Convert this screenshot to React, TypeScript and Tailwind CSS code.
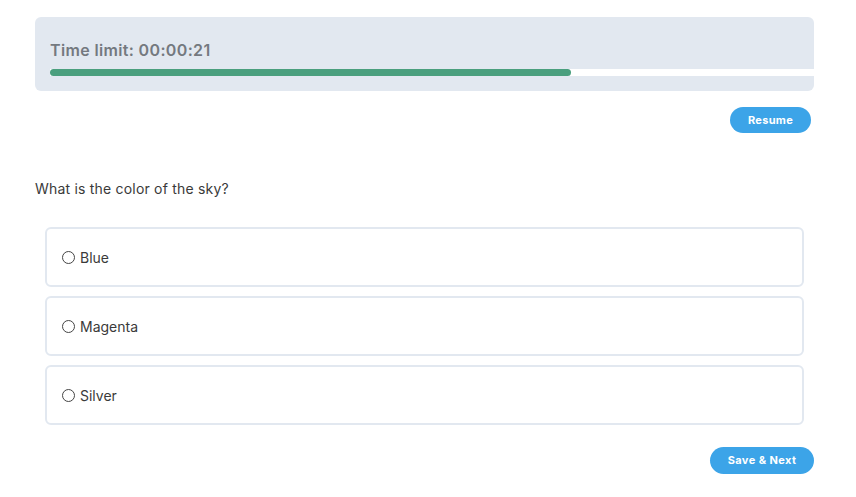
import React from "react";

const options = ["Blue", "Magenta", "Silver"];

export default function App() {
  return (
    <div className="w-[856px] h-[497px] bg-white" style={{ fontFamily: "Inter, 'Noto Sans', sans-serif" }}>
      <div className="pt-[17px] pl-[35px] w-[814px]">
        <div className="bg-[#e2e8f0] rounded-[6px] pl-[15px] pt-[22px] pb-[15px]">
          <div className="text-[16px] font-semibold text-[#74797f] leading-[22px] tracking-[0.35px]">Time limit: 00:00:21</div>
          <div className="mt-[8px] h-[7px] bg-white">
            <div className="h-[7px] bg-[#4a9f7e] rounded-l-full rounded-r-full" style={{ width: "68.2%" }} />
          </div>
        </div>
        <div className="flex justify-end mt-[16px] pr-[3px]">
          <button className="h-[26px] w-[81px] rounded-full bg-[#3ca4e8] text-white text-[11px] font-bold tracking-[0.3px]">
            Resume
          </button>
        </div>
        <div className="mt-[46px] text-[14px] text-[#3a3a3a] leading-[20px] tracking-[0.2px]">What is the color of the sky?</div>
        <div className="mt-[28px] ml-[10px] mr-[10px] flex flex-col gap-[9px]">
          {options.map((o) => (
            <div key={o} className="h-[60px] border-2 border-[#e2e8f0] rounded-[6px] flex items-center pl-[15px]">
              <span className="w-[13px] h-[13px] rounded-full border border-[#444] mr-[5px]" />
              <span className="text-[14px] text-[#3a3a3a]">{o}</span>
            </div>
          ))}
        </div>
        <div className="flex justify-end mt-[22px]">
          <button className="h-[27px] w-[104px] rounded-full bg-[#3ca4e8] text-white text-[11px] font-bold tracking-[0.4px]">
            Save &amp; Next
          </button>
        </div>
      </div>
    </div>
  );
}
